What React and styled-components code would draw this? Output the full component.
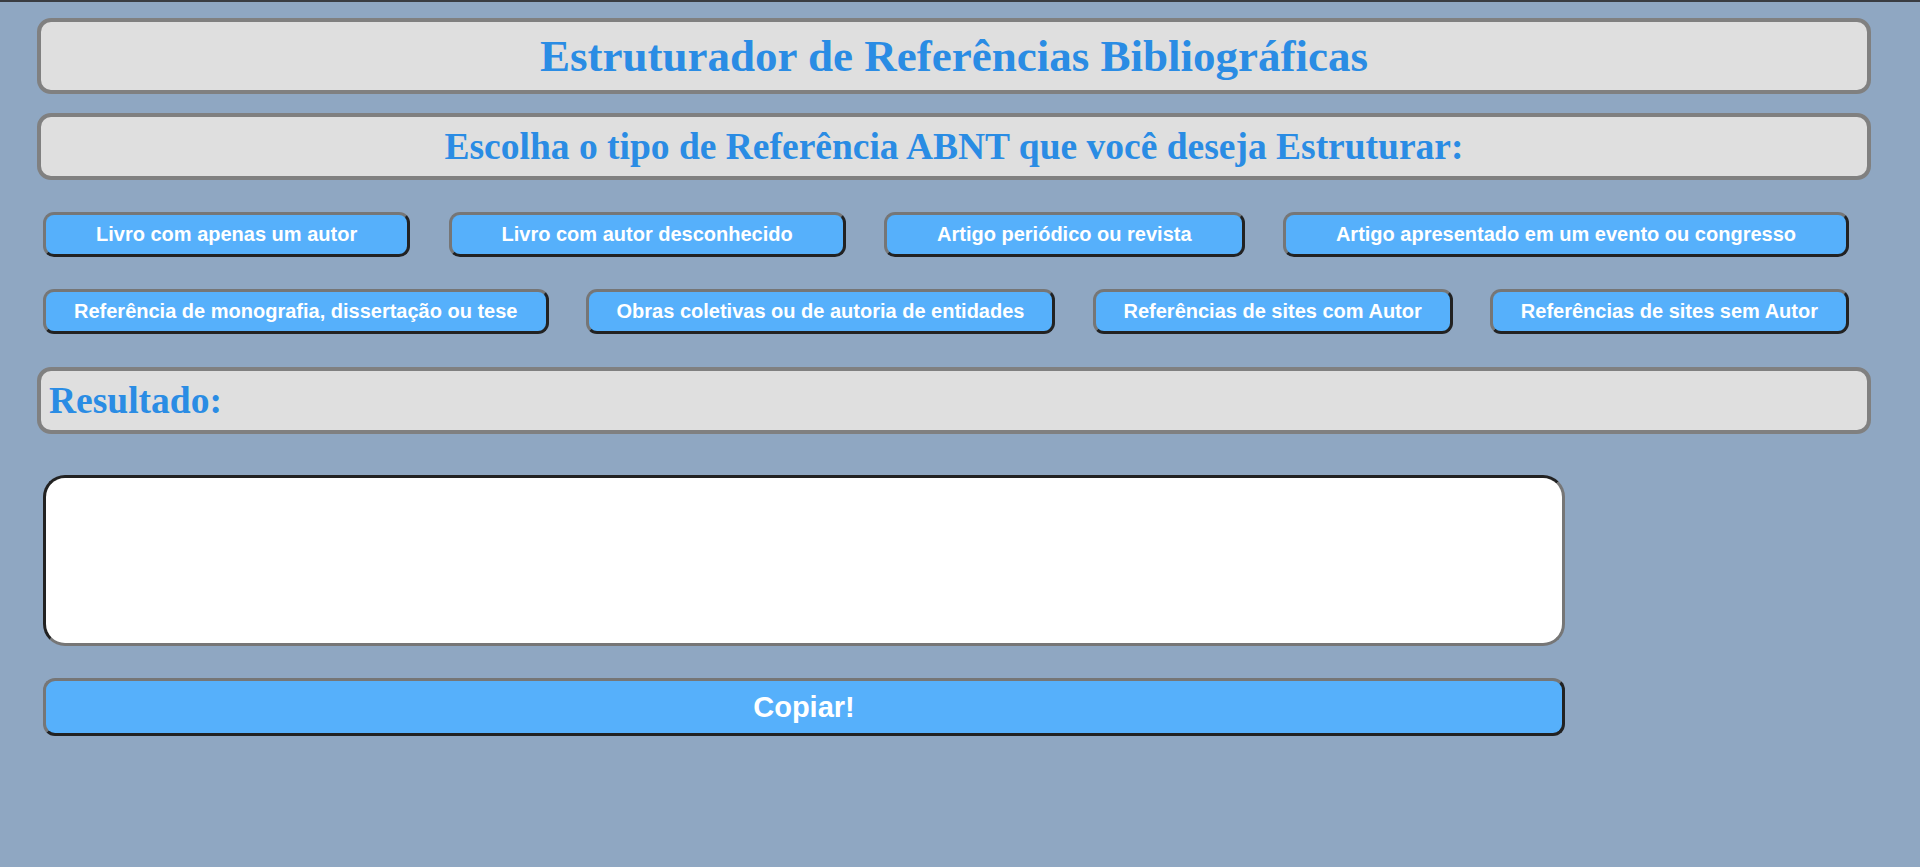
import React, { useState } from 'react';
import styled, { createGlobalStyle } from 'styled-components';

const GlobalStyle = createGlobalStyle`
  html, body {
    margin: 0;
    padding: 0;
  }
  body {
    background-color: #8fa7c2;
    min-height: 100vh;
    border-top: 2px solid #3a3d42;
    box-sizing: border-box;
    font-family: 'Liberation Serif', 'Times New Roman', serif;
  }
`;

// cada linha tem seu próprio espaçamento interno nos botões
const tipos = [
  {
    pad: 50,
    itens: [
      'Livro com apenas um autor',
      'Livro com autor desconhecido',
      'Artigo periódico ou revista',
      'Artigo apresentado em um evento ou congresso',
    ],
  },
  {
    pad: 28,
    itens: [
      'Referência de monografia, dissertação ou tese',
      'Obras coletivas ou de autoria de entidades',
      'Referências de sites com Autor',
      'Referências de sites sem Autor',
    ],
  },
];

const App = () => {
  const [resultado, setResultado] = useState('');

  const copiar = () => {
    if (navigator.clipboard) navigator.clipboard.writeText(resultado);
  };

  return (
    <>
      <GlobalStyle />
      <Page>
        <Panel $height={76} $center>
          <Title>Estruturador de Referências Bibliográficas</Title>
        </Panel>
        <Panel $height={67} $center $top={19}>
          <Subtitle>Escolha o tipo de Referência ABNT que você deseja Estruturar:</Subtitle>
        </Panel>
        <Options>
          {tipos.map((linha, i) => (
            <OptionRow key={i}>
              {linha.itens.map((t) => (
                <OptionButton key={t} $pad={linha.pad}>
                  {t}
                </OptionButton>
              ))}
            </OptionRow>
          ))}
        </Options>
        <Panel $height={67} $top={33}>
          <Subtitle>Resultado:</Subtitle>
        </Panel>
        <Output>
          <ResultArea
            value={resultado}
            onChange={(e) => setResultado(e.target.value)}
          />
          <CopyButton onClick={copiar}>Copiar!</CopyButton>
        </Output>
      </Page>
    </>
  );
};

const Page = styled.div`
  display: flex;
  flex-direction: column;
  width: 1834px;
  margin-left: 37px;
  padding-top: 16px;
`;

const Panel = styled.div`
  box-sizing: border-box;
  height: ${(p) => p.$height}px;
  margin-top: ${(p) => p.$top || 0}px;
  display: flex;
  align-items: center;
  justify-content: ${(p) => (p.$center ? 'center' : 'flex-start')};
  padding: 0 8px;
  background-color: #dfdfdf;
  border: 4px solid #808080;
  border-radius: 14px;
`;

const Title = styled.h1`
  margin: 0;
  font-size: 45px;
  font-weight: bold;
  color: #2a8ce4;
  line-height: 1;
`;

const Subtitle = styled.h2`
  margin: 0;
  font-size: 37.5px;
  font-weight: bold;
  color: #2a8ce4;
  line-height: 1;
`;

const Options = styled.div`
  display: flex;
  flex-direction: column;
  gap: 32px;
  margin-top: 32px;
  padding: 0 22px 0 6px;
`;

const OptionRow = styled.div`
  display: flex;
  justify-content: space-between;
`;

const OptionButton = styled.button`
  box-sizing: border-box;
  height: 45px;
  padding: 0 ${(p) => p.$pad}px;
  background-color: #56b0fb;
  color: #ffffff;
  font-family: 'Liberation Sans', Arial, sans-serif;
  font-size: 20px;
  font-weight: bold;
  border: 3px solid;
  border-color: #767676 #222222 #222222 #767676;
  border-radius: 11px;
  cursor: pointer;
  white-space: nowrap;
`;

const Output = styled.div`
  display: flex;
  flex-direction: column;
  gap: 32px;
  width: 1522px;
  margin: 41px 0 0 6px;
`;

const ResultArea = styled.textarea`
  box-sizing: border-box;
  height: 171px;
  padding: 10px 14px;
  background: #ffffff;
  border: 3px solid;
  border-color: #222222 #767676 #767676 #222222;
  border-radius: 22px;
  font-family: 'Liberation Sans', Arial, sans-serif;
  font-size: 16px;
  resize: none;
  outline: none;
`;

const CopyButton = styled.button`
  box-sizing: border-box;
  height: 58px;
  background-color: #56b0fb;
  color: #ffffff;
  font-family: 'Liberation Sans', Arial, sans-serif;
  font-size: 29px;
  font-weight: bold;
  border: 3px solid;
  border-color: #767676 #222222 #222222 #767676;
  border-radius: 12px;
  cursor: pointer;
`;

export default App;
